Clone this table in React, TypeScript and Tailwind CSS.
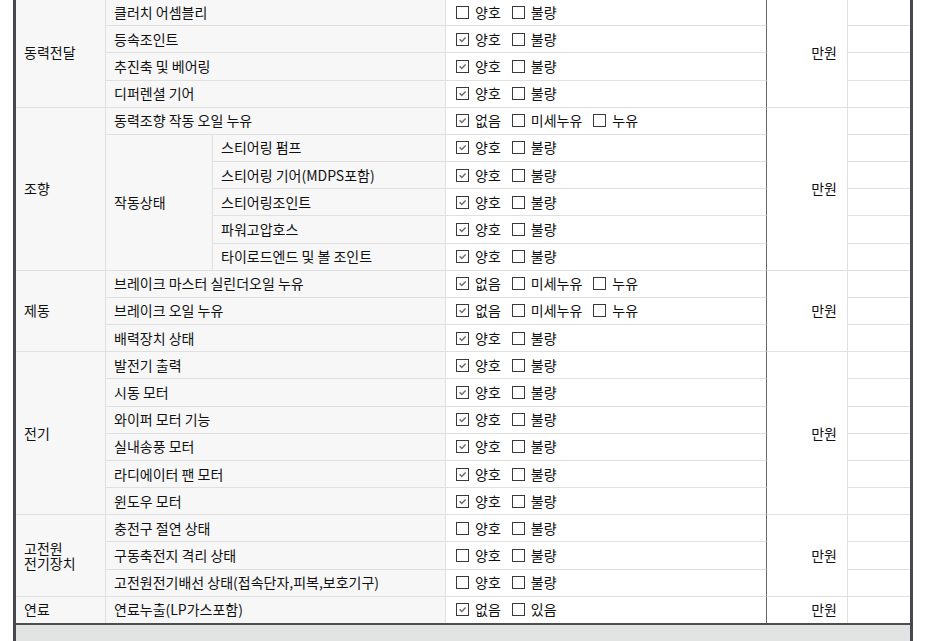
import React from "react";

type Opt = "good" | "leak" | "fuel";
const LABELS: Record<Opt, string[]> = {
  good: ["양호", "불량"],
  leak: ["없음", "미세누유", "누유"],
  fuel: ["없음", "있음"],
};

type Item = { name: string; opt: Opt; checked: number };
type Group = {
  cat: string[];
  span: string;
  first?: Item;
  sub?: { label: string; span: string; items: Item[] };
  items: Item[];
};

const groups: Group[] = [
  {
    cat: ["동력전달"],
    span: "row-span-4",
    items: [
      { name: "클러치 어셈블리", opt: "good", checked: -1 },
      { name: "등속조인트", opt: "good", checked: 0 },
      { name: "추진축 및 베어링", opt: "good", checked: 0 },
      { name: "디퍼렌셜 기어", opt: "good", checked: 0 },
    ],
  },
  {
    cat: ["조향"],
    span: "row-span-6",
    first: { name: "동력조향 작동 오일 누유", opt: "leak", checked: 0 },
    sub: {
      label: "작동상태",
      span: "row-span-5",
      items: [
        { name: "스티어링 펌프", opt: "good", checked: 0 },
        { name: "스티어링 기어(MDPS포함)", opt: "good", checked: 0 },
        { name: "스티어링조인트", opt: "good", checked: 0 },
        { name: "파워고압호스", opt: "good", checked: 0 },
        { name: "타이로드엔드 및 볼 조인트", opt: "good", checked: 0 },
      ],
    },
    items: [],
  },
  {
    cat: ["제동"],
    span: "row-span-3",
    items: [
      { name: "브레이크 마스터 실린더오일 누유", opt: "leak", checked: 0 },
      { name: "브레이크 오일 누유", opt: "leak", checked: 0 },
      { name: "배력장치 상태", opt: "good", checked: 0 },
    ],
  },
  {
    cat: ["전기"],
    span: "row-span-6",
    items: [
      { name: "발전기 출력", opt: "good", checked: 0 },
      { name: "시동 모터", opt: "good", checked: 0 },
      { name: "와이퍼 모터 기능", opt: "good", checked: 0 },
      { name: "실내송풍 모터", opt: "good", checked: 0 },
      { name: "라디에이터 팬 모터", opt: "good", checked: 0 },
      { name: "윈도우 모터", opt: "good", checked: 0 },
    ],
  },
  {
    cat: ["고전원", "전기장치"],
    span: "row-span-3",
    items: [
      { name: "충전구 절연 상태", opt: "good", checked: -1 },
      { name: "구동축전지 격리 상태", opt: "good", checked: -1 },
      { name: "고전원전기배선 상태(접속단자,피복,보호기구)", opt: "good", checked: -1 },
    ],
  },
  {
    cat: ["연료"],
    span: "row-span-1",
    items: [{ name: "연료누출(LP가스포함)", opt: "fuel", checked: 0 }],
  },
];

const line = "border-r border-b border-r-[#e0e0e0] border-b-[#e0e0e0]";

function Box({ checked }: { checked: boolean }) {
  return (
    <span className="w-[13px] h-[13px] border border-[#3a3a3a] bg-white flex items-center justify-center shrink-0">
      {checked && (
        <svg width="11" height="11" viewBox="0 0 11 11">
          <path d="M2.6 5.3 L4.8 7.5 L8.6 3.6" stroke="#6a6a6a" strokeWidth="1.4" fill="none" />
        </svg>
      )}
    </span>
  );
}

function Checks({ item }: { item: Item }) {
  return (
    <div className="border-r border-b border-r-[#666] border-b-[#e0e0e0] bg-white flex items-center pl-[10px]">
      {LABELS[item.opt].map((l, i) => (
        <div key={i} className="flex items-center mr-[11px]">
          <Box checked={item.checked === i} />
          <span className="ml-[6px]">{l}</span>
        </div>
      ))}
    </div>
  );
}

function Tail() {
  return <div className="border-b border-b-[#e0e0e0] bg-white" />;
}

export default function App() {
  return (
    <div className="w-[931px] h-[641px] bg-white overflow-hidden font-['Noto_Sans_CJK_KR','Liberation_Sans',sans-serif] text-[14px] text-[#111]">
      <div className="ml-[13px] w-[900px] h-full border-x-[3px] border-x-[#47474d] flex flex-col">
        <div className="-mt-px grid grid-cols-[90px_107px_233px_321px_81px_62px] grid-rows-[repeat(23,27.18px)]">
          {groups.map((g, gi) => (
            <React.Fragment key={gi}>
              <div className={`${g.span} ${line} bg-[#f7f7f7] flex items-center pl-2`}>
                <div className="leading-[15px]">
                  {g.cat.map((c, ci) => (
                    <div key={ci}>{c}</div>
                  ))}
                </div>
              </div>
              {g.first && (
                <>
                  <div className={`col-span-2 ${line} bg-[#f7f7f7] flex items-center pl-2`}>{g.first.name}</div>
                  <Checks item={g.first} />
                  <div className={`${g.span} ${line} bg-white flex items-center justify-end pr-[10px]`}>만원</div>
                  <Tail />
                </>
              )}
              {g.sub && (
                <>
                  <div className={`${g.sub.span} ${line} bg-[#f7f7f7] flex items-center pl-2`}>{g.sub.label}</div>
                  {g.sub.items.map((it, ii) => (
                    <React.Fragment key={ii}>
                      <div className={`${line} bg-[#f7f7f7] flex items-center pl-2`}>{it.name}</div>
                      <Checks item={it} />
                      <Tail />
                    </React.Fragment>
                  ))}
                </>
              )}
              {g.items.map((it, ii) => (
                <React.Fragment key={ii}>
                  <div className={`col-span-2 ${line} bg-[#f7f7f7] flex items-center pl-2`}>{it.name}</div>
                  <Checks item={it} />
                  {ii === 0 && (
                    <div className={`${g.span} ${line} bg-white flex items-center justify-end pr-[10px]`}>만원</div>
                  )}
                  <Tail />
                </React.Fragment>
              ))}
            </React.Fragment>
          ))}
        </div>
        <div className="-mt-px border-t-2 border-t-[#4f4f4f] bg-[#e2e4e4] flex-1" />
      </div>
    </div>
  );
}
